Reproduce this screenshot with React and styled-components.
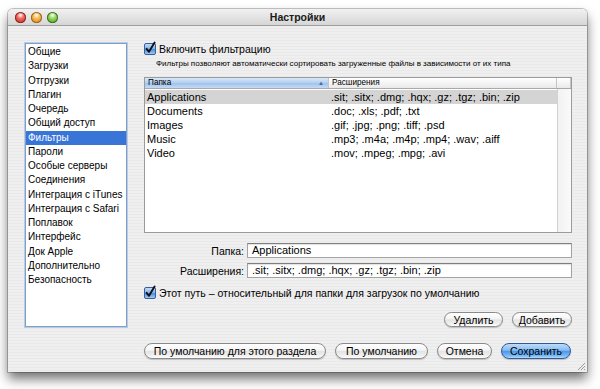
import React from "react";
import styled, { createGlobalStyle } from "styled-components";

const GlobalStyle = createGlobalStyle`
  html, body { margin: 0; padding: 0; background: #ffffff; }
  body { font-family: "Liberation Sans", Arial, sans-serif; color: #000; }
  * { box-sizing: border-box; }
`;

const Page = styled.div`
  padding: 9px 0 0 8px;
  width: 600px;
  height: 389px;
  overflow: hidden;
`;

const Window = styled.div`
  position: relative;
  width: 579px;
  height: 363px;
  display: flex;
  flex-direction: column;
  border-radius: 5px 5px 0 0;
  box-shadow: 0 7px 12px rgba(0, 0, 0, 0.55), 0 0 0 1px rgba(0, 0, 0, 0.22);
  overflow: hidden;
`;

const TitleBar = styled.div`
  height: 17px;
  display: grid;
  grid-template-columns: 1fr auto 1fr;
  align-items: center;
  background: linear-gradient(#f1f1f1, #d6d6d6);
  border-bottom: 1px solid #9c9c9c;
`;

const Lights = styled.div`
  display: flex;
  gap: 5px;
  padding-left: 7px;
`;

const Light = styled.span`
  width: 11px;
  height: 11px;
  border-radius: 50%;
  background: radial-gradient(circle at 50% 30%, #fff 0, ${(p) => p.$c1} 35%, ${(p) => p.$c2} 100%);
  box-shadow: inset 0 0 0 1px ${(p) => p.$edge};
`;

const Title = styled.div`
  font-weight: bold;
  font-size: 10.5px;
  color: #1a1a1a;
`;

const Body = styled.div`
  flex: 1;
  display: flex;
  flex-direction: column;
  padding: 17px 15px 13px 17px;
  background: repeating-linear-gradient(to bottom, #efefef 0, #efefef 2px, #e9e9e9 2px, #e9e9e9 3px);
`;

const TopRow = styled.div`
  display: flex;
  gap: 17px;
  height: 284px;
`;

const Sidebar = styled.ul`
  list-style: none;
  margin: 0;
  padding: 1px 0 0 0;
  width: 102px;
  height: 284px;
  background: #fff;
  border: 1px solid #7f9ecb;
  box-shadow: 0 0 0 1px #b9cce6;
`;

const SideItem = styled.li`
  height: 14.25px;
  line-height: 14.25px;
  padding-left: 2px;
  font-size: 10px;
  white-space: nowrap;
  background: ${(p) => (p.$active ? "#3875d7" : "transparent")};
  color: ${(p) => (p.$active ? "#fff" : "#000")};
`;

const Panel = styled.div`
  width: 428px;
  display: flex;
  flex-direction: column;
`;

const CheckRow = styled.label`
  display: flex;
  align-items: center;
  gap: 3px;
  height: 12px;
  font-size: 10.5px;
  margin-top: ${(p) => p.$mt || 0}px;
`;

const Description = styled.div`
  margin: 3px 0 0 12px;
  height: 11px;
  line-height: 11px;
  font-size: 8px;
  white-space: nowrap;
`;

const Table = styled.div`
  margin-top: 8px;
  height: 156px;
  border: 1px solid #9b9b9b;
  background: #fff;
  display: flex;
  flex-direction: column;
`;

const HeaderRow = styled.div`
  display: grid;
  grid-template-columns: 184px 1fr 14px;
  height: 11px;
  border-bottom: 1px solid #a9a9a9;
  background: linear-gradient(#ffffff, #e9e9e9);
`;

const HeaderCell = styled.div`
  position: relative;
  font-size: 8.2px;
  line-height: 10px;
  padding-left: 3px;
  border-right: 1px solid #c4c4c4;
  background: ${(p) =>
    p.$sorted ? "linear-gradient(#d8e7f8 0, #b3cff0 50%, #9ec1ec 51%, #c4dbf6 100%)" : "transparent"};
`;

const SortArrow = styled.span`
  position: absolute;
  right: 4px;
  top: 0;
  font-size: 6px;
  line-height: 10px;
  color: #4a6a98;
`;

const TableBody = styled.div`
  flex: 1;
  display: grid;
  grid-template-columns: 1fr 14px;
`;

const Rows = styled.div`
  padding-top: 1px;
`;

const Row = styled.div`
  display: grid;
  grid-template-columns: 184px 1fr;
  height: 14.1px;
  line-height: 14.1px;
  font-size: 11px;
  background: ${(p) => (p.$selected ? "#d4d4d4" : "transparent")};
`;

const Cell = styled.div`
  padding-left: ${(p) => p.$pad}px;
  white-space: nowrap;
  overflow: hidden;
`;

const Scroller = styled.div`
  border-left: 1px solid #d2d2d2;
  background: linear-gradient(to right, #f2f2f2, #fafafa);
`;

const Fields = styled.div`
  margin-top: 10px;
  display: grid;
  grid-template-columns: 100px 1fr;
  column-gap: 3px;
  row-gap: 5px;
  align-items: center;
`;

const FieldLabel = styled.div`
  text-align: right;
  font-size: 10.5px;
`;

const Field = styled.div`
  height: 15px;
  line-height: 13px;
  padding-left: 4px;
  font-size: 11px;
  background: #fff;
  border: 1px solid #a3a3a3;
  border-top-color: #7e7e7e;
  box-shadow: inset 0 1px 1px rgba(0, 0, 0, 0.12);
  white-space: nowrap;
`;

const ButtonRow = styled.div`
  display: flex;
  justify-content: flex-end;
  gap: ${(p) => p.$gap || 9}px;
  margin-top: ${(p) => p.$mt || 0}px;
  padding-right: ${(p) => p.$pr || 0}px;
`;

const Button = styled.button`
  width: ${(p) => p.$w}px;
  height: ${(p) => p.$h || 15}px;
  padding: 0;
  border-radius: 8px;
  font-family: inherit;
  font-size: 10.5px;
  color: #000;
  border: 1px solid ${(p) => (p.$primary ? "#31589a" : "#8a8a8a")};
  background: ${(p) =>
    p.$primary
      ? "linear-gradient(#bfdcf8 0, #84bbf1 45%, #4c97ec 52%, #7cbaf6 85%, #b4dcfb 100%)"
      : "linear-gradient(#ffffff 0, #f4f4f4 45%, #e3e3e3 52%, #f1f1f1 85%, #ffffff 100%)"};
  box-shadow: 0 1px 1px rgba(0, 0, 0, 0.2);
`;

const BottomRow = styled(ButtonRow)`
  margin-top: 16px;
`;

const Grip = styled.svg`
  position: absolute;
  right: 1px;
  bottom: 1px;
`;

const CheckBox = () => (
  <svg width="12" height="12" viewBox="0 0 12 12" style={{ overflow: "visible", flex: "none" }}>
    <defs>
      <linearGradient id="cbg" x1="0" y1="0" x2="0" y2="1">
        <stop offset="0" stopColor="#c9e0f9" />
        <stop offset="0.5" stopColor="#7fb0ea" />
        <stop offset="0.55" stopColor="#4e8fe0" />
        <stop offset="1" stopColor="#a8d0f7" />
      </linearGradient>
    </defs>
    <rect x="0.5" y="0.5" width="11" height="11" rx="1.5" fill="url(#cbg)" stroke="#3b5f98" />
    <path d="M2.6 5.8 L5 8.8 L10.6 -0.5" fill="none" stroke="#111" strokeWidth="1.9" strokeLinecap="round" strokeLinejoin="round" />
  </svg>
);

const sidebarItems = [
  "Общие",
  "Загрузки",
  "Отгрузки",
  "Плагин",
  "Очередь",
  "Общий доступ",
  "Фильтры",
  "Пароли",
  "Особые серверы",
  "Соединения",
  "Интеграция с iTunes",
  "Интеграция с Safari",
  "Поплавок",
  "Интерфейс",
  "Док Apple",
  "Дополнительно",
  "Безопасность",
];

const rows = [
  ["Applications", ".sit; .sitx; .dmg; .hqx; .gz; .tgz; .bin; .zip"],
  ["Documents", ".doc; .xls; .pdf; .txt"],
  ["Images", ".gif; .jpg; .png; .tiff; .psd"],
  ["Music", ".mp3; .m4a; .m4p; .mp4; .wav; .aiff"],
  ["Video", ".mov; .mpeg; .mpg; .avi"],
];

export default function App() {
  return (
    <>
      <GlobalStyle />
      <Page>
        <Window>
          <TitleBar>
            <Lights>
              <Light $c1="#ef6a62" $c2="#c1211b" $edge="#8e2a26" />
              <Light $c1="#f6bb55" $c2="#d37b10" $edge="#9a6320" />
              <Light $c1="#96d861" $c2="#3f9a1f" $edge="#3f7324" />
            </Lights>
            <Title>Настройки</Title>
            <span />
          </TitleBar>
          <Body>
            <TopRow>
              <Sidebar>
                {sidebarItems.map((s) => (
                  <SideItem key={s} $active={s === "Фильтры"}>
                    {s}
                  </SideItem>
                ))}
              </Sidebar>
              <Panel>
                <CheckRow>
                  <CheckBox />
                  Включить фильтрацию
                </CheckRow>
                <Description>
                  Фильтры позволяют автоматически сортировать загруженные файлы в зависимости от их типа
                </Description>
                <Table>
                  <HeaderRow>
                    <HeaderCell $sorted>
                      Папка
                      <SortArrow>▲</SortArrow>
                    </HeaderCell>
                    <HeaderCell>Расширения</HeaderCell>
                    <HeaderCell />
                  </HeaderRow>
                  <TableBody>
                    <Rows>
                      {rows.map(([a, b], i) => (
                        <Row key={a} $selected={i === 0}>
                          <Cell $pad={2}>{a}</Cell>
                          <Cell $pad={2}>{b}</Cell>
                        </Row>
                      ))}
                    </Rows>
                    <Scroller />
                  </TableBody>
                </Table>
                <Fields>
                  <FieldLabel>Папка:</FieldLabel>
                  <Field>Applications</Field>
                  <FieldLabel>Расширения:</FieldLabel>
                  <Field>.sit; .sitx; .dmg; .hqx; .gz; .tgz; .bin; .zip</Field>
                </Fields>
                <CheckRow $mt={9}>
                  <CheckBox />
                  Этот путь – относительный для папки для загрузок по умолчанию
                </CheckRow>
                <ButtonRow $mt={13} $gap={9}>
                  <Button $w={59}>Удалить</Button>
                  <Button $w={60}>Добавить</Button>
                </ButtonRow>
              </Panel>
            </TopRow>
            <BottomRow $gap={9} $pr={1}>
              <Button $w={182} $h={16}>По умолчанию для этого раздела</Button>
              <Button $w={93} $h={16}>По умолчанию</Button>
              <Button $w={55} $h={16}>Отмена</Button>
              <Button $w={70} $h={16} $primary>
                Сохранить
              </Button>
            </BottomRow>
          </Body>
          <Grip width="9" height="9" viewBox="0 0 9 9">
            <path d="M8 1 L1 8 M8 4 L4 8 M8 7 L7 8" stroke="#9a9a9a" strokeWidth="1" />
          </Grip>
        </Window>
      </Page>
    </>
  );
}
